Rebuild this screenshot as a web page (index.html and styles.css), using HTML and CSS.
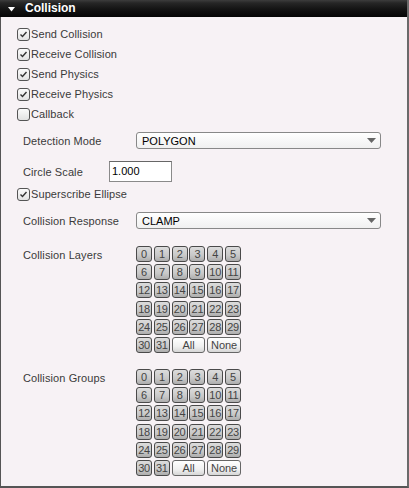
FILE: index.html
```html
<!DOCTYPE html>
<html>
<head>
<meta charset="utf-8">
<link rel="stylesheet" href="styles.css">
</head>
<body>
<div class="panel">
  <div class="header">
    <svg class="tri" width="7" height="5" viewBox="0 0 7 5"><path d="M0 0H7L3.5 4.5Z" fill="#fff"/></svg>
    <span class="title">Collision</span>
  </div>
  <div class="body">
    <div class="checks">
      <label class="check"><span class="box"><svg width="11" height="11" viewBox="0 0 11 11"><path d="M2.5 5.5L4.5 7.5L8.5 3" fill="none" stroke="#333" stroke-width="1.4"/></svg></span>Send Collision</label>
      <label class="check"><span class="box"><svg width="11" height="11" viewBox="0 0 11 11"><path d="M2.5 5.5L4.5 7.5L8.5 3" fill="none" stroke="#333" stroke-width="1.4"/></svg></span>Receive Collision</label>
      <label class="check"><span class="box"><svg width="11" height="11" viewBox="0 0 11 11"><path d="M2.5 5.5L4.5 7.5L8.5 3" fill="none" stroke="#333" stroke-width="1.4"/></svg></span>Send Physics</label>
      <label class="check"><span class="box"><svg width="11" height="11" viewBox="0 0 11 11"><path d="M2.5 5.5L4.5 7.5L8.5 3" fill="none" stroke="#333" stroke-width="1.4"/></svg></span>Receive Physics</label>
      <label class="check"><span class="box"></span>Callback</label>
    </div>
    <div class="row r-detect">
      <span class="lbl wide">Detection Mode</span>
      <div class="select"><span>POLYGON</span><svg width="9" height="5" viewBox="0 0 9 5"><path d="M0 0H9L4.5 5Z" fill="#666"/></svg></div>
    </div>
    <div class="row r-circle">
      <span class="lbl narrow">Circle Scale</span>
      <div class="input">1.000</div>
    </div>
    <label class="check r-super"><span class="box"><svg width="11" height="11" viewBox="0 0 11 11"><path d="M2.5 5.5L4.5 7.5L8.5 3" fill="none" stroke="#333" stroke-width="1.4"/></svg></span>Superscribe Ellipse</label>
    <div class="row r-resp">
      <span class="lbl wide">Collision Response</span>
      <div class="select"><span>CLAMP</span><svg width="9" height="5" viewBox="0 0 9 5"><path d="M0 0H9L4.5 5Z" fill="#666"/></svg></div>
    </div>
    <div class="row gridrow r-layers">
      <span class="lbl wide glbl">Collision Layers</span>
      <div class="grid">
        <span class="b">0</span><span class="b">1</span><span class="b">2</span><span class="b">3</span><span class="b">4</span><span class="b">5</span>
        <span class="b">6</span><span class="b">7</span><span class="b">8</span><span class="b">9</span><span class="b">10</span><span class="b">11</span>
        <span class="b">12</span><span class="b">13</span><span class="b">14</span><span class="b">15</span><span class="b">16</span><span class="b">17</span>
        <span class="b">18</span><span class="b">19</span><span class="b">20</span><span class="b">21</span><span class="b">22</span><span class="b">23</span>
        <span class="b">24</span><span class="b">25</span><span class="b">26</span><span class="b">27</span><span class="b">28</span><span class="b">29</span>
        <span class="b">30</span><span class="b">31</span><span class="b w">All</span><span class="b w">None</span>
      </div>
    </div>
    <div class="row gridrow r-groups">
      <span class="lbl wide glbl">Collision Groups</span>
      <div class="grid">
        <span class="b">0</span><span class="b">1</span><span class="b">2</span><span class="b">3</span><span class="b">4</span><span class="b">5</span>
        <span class="b">6</span><span class="b">7</span><span class="b">8</span><span class="b">9</span><span class="b">10</span><span class="b">11</span>
        <span class="b">12</span><span class="b">13</span><span class="b">14</span><span class="b">15</span><span class="b">16</span><span class="b">17</span>
        <span class="b">18</span><span class="b">19</span><span class="b">20</span><span class="b">21</span><span class="b">22</span><span class="b">23</span>
        <span class="b">24</span><span class="b">25</span><span class="b">26</span><span class="b">27</span><span class="b">28</span><span class="b">29</span>
        <span class="b">30</span><span class="b">31</span><span class="b w">All</span><span class="b w">None</span>
      </div>
    </div>
  </div>
</div>
</body>
</html>
```
FILE: styles.css
```css
html, body {
  margin: 0;
  padding: 0;
  background: #f7f2f5;
}
body {
  width: 409px;
  height: 488px;
  overflow: hidden;
  font-family: "Liberation Sans", Arial, sans-serif;
  font-size: 11px;
  color: #3a3a3a;
}
.panel {
  width: 409px;
  height: 488px;
  box-sizing: border-box;
  border-left: 1px solid #555;
  border-right: 2px solid #6a6a6a;
  border-bottom: 2px solid #555;
  display: flex;
  flex-direction: column;
}
.header {
  height: 17px;
  flex: none;
  background: linear-gradient(#3c3c3c 0px, #262626 3px, #141414 9px, #050505 100%);
  display: flex;
  align-items: center;
  margin-left: -1px;
}
.tri {
  margin-left: 8px;
  margin-top: 1px;
}
.title {
  margin-left: 10px;
  color: #fff;
  font-weight: bold;
  font-size: 12px;
  line-height: 17px;
}
.body {
  padding-left: 16px;
  flex: 1;
}
.checks {
  padding-top: 7px;
  display: flex;
  flex-direction: column;
}
.check {
  display: flex;
  align-items: center;
  height: 20px;
  color: #3a3a3a;
  letter-spacing: 0.1px;
}
.box {
  width: 11px;
  height: 11px;
  border: 1px solid #555;
  border-radius: 3px;
  background: linear-gradient(#fbfbfb, #e2e2e2);
  margin-right: 1px;
  flex: none;
  display: flex;
}
.row {
  display: flex;
  align-items: center;
  padding-left: 6px;
}
.lbl {
  flex: none;
  color: #3a3a3a;
  letter-spacing: 0.1px;
}
.lbl.wide { width: 113px; }
.lbl.narrow { width: 86px; }
.select {
  width: 245px;
  height: 17px;
  box-sizing: border-box;
  border: 1px solid #888;
  border-radius: 3px;
  background: linear-gradient(#ffffff, #f0f0f0);
  display: flex;
  align-items: center;
  justify-content: space-between;
  padding: 0 4px 0 5px;
  color: #000;
}
.r-detect { margin-top: 8px; }
.r-circle { margin-top: 12px; }
.input {
  width: 63px;
  height: 21px;
  box-sizing: border-box;
  border: 1px solid #8a8a8a;
  border-top-color: #666;
  background: #fff;
  line-height: 19px;
  padding-left: 2px;
  color: #000;
}
.r-super { margin-top: 2px; }
.r-resp { margin-top: 8px; }
.gridrow { align-items: flex-start; }
.glbl { padding-top: 3px; }
.r-layers { margin-top: 17px; }
.r-groups { margin-top: 16px; }
.grid {
  display: grid;
  grid-template-columns: repeat(6, 16px);
  grid-auto-rows: 16px;
  column-gap: 1.8px;
  row-gap: 2.2px;
}
.b {
  box-sizing: border-box;
  border: 1px solid #4a4a4a;
  border-radius: 3px;
  background: linear-gradient(#dcdcdc, #c8c8c8 60%, #adadad);
  display: flex;
  align-items: center;
  justify-content: center;
  font-size: 11px;
  color: #444;
  letter-spacing: -0.3px;
}
.b.w {
  grid-column: span 2;
  background: linear-gradient(#ffffff, #f0f0f0 60%, #d6d6d6);
  border-color: #666;
  letter-spacing: 0;
}
```
